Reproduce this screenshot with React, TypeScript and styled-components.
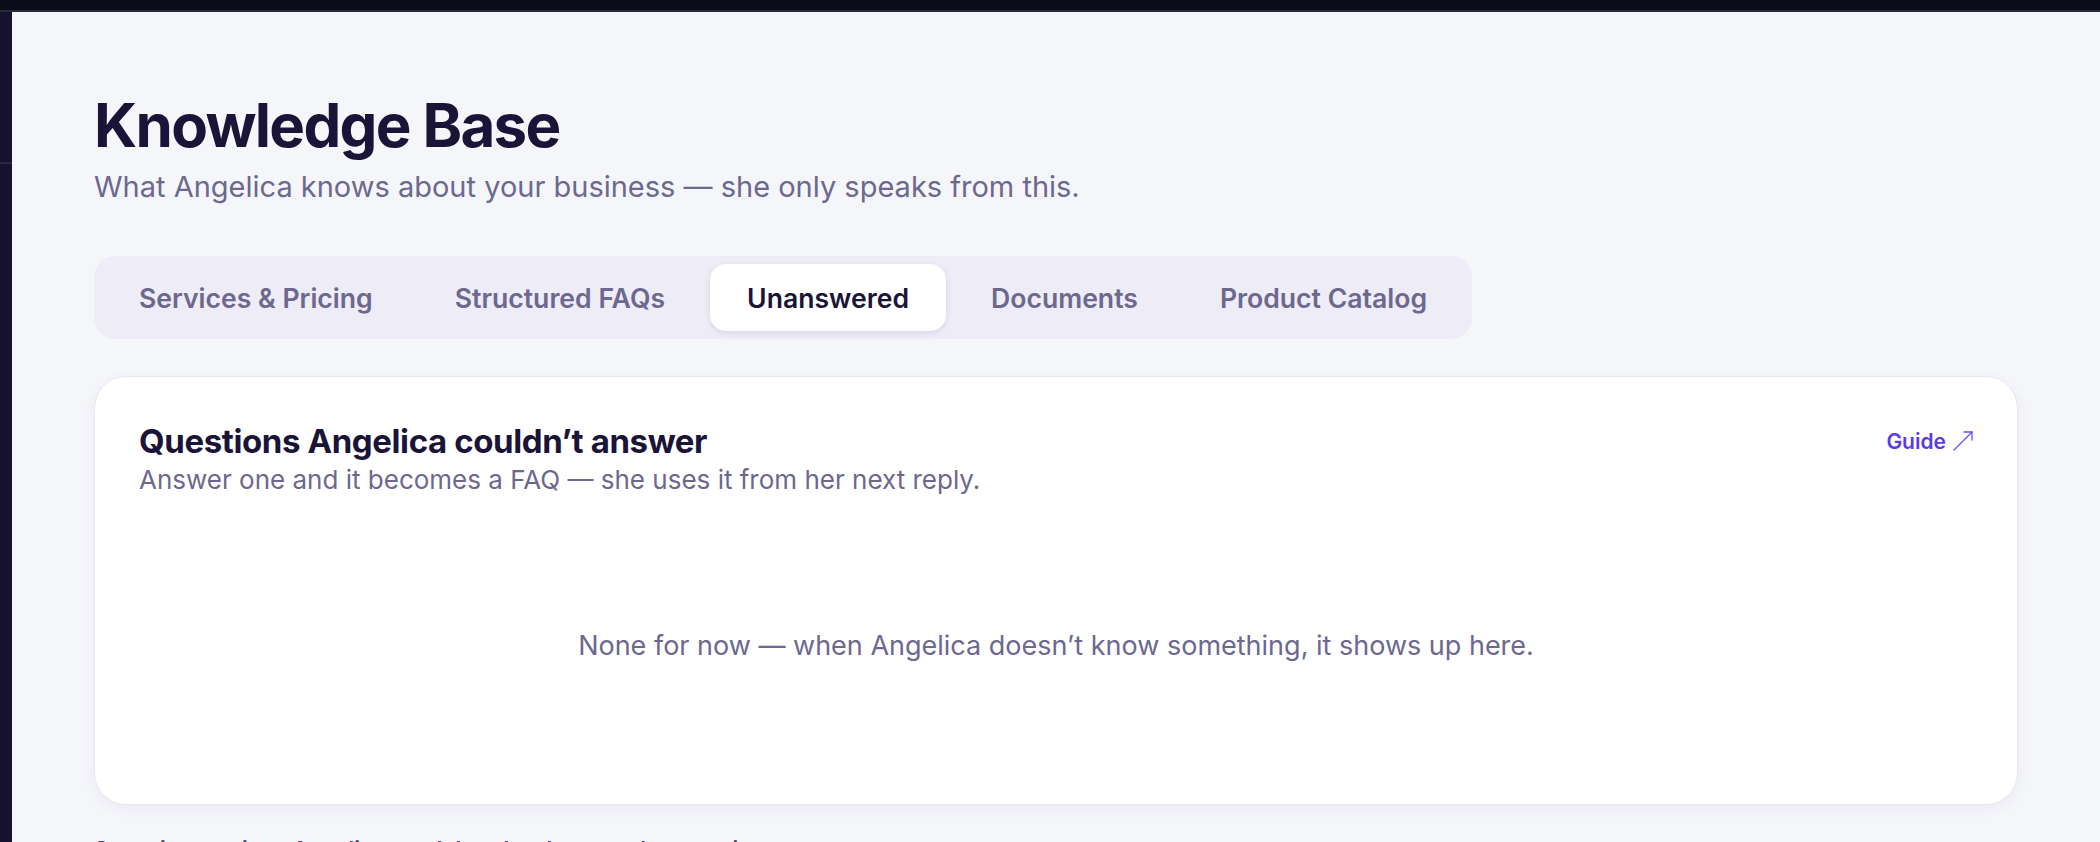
import React from 'react';
import styled, { createGlobalStyle } from 'styled-components';

const TABS = ['Services & Pricing', 'Structured FAQs', 'Unanswered', 'Documents', 'Product Catalog'];

const GlobalStyle = createGlobalStyle`
	html, body {
		margin: 0;
		padding: 0;
		height: 100%;
		overflow: hidden;
		background: #0b0c1a;
	}
	body {
		font-family: Inter, 'Noto Sans', 'Liberation Sans', sans-serif;
		-webkit-font-smoothing: antialiased;
	}
	#root {
		height: 100%;
	}
`;

const Shell = styled.div`
	display: flex;
	flex-direction: column;
	height: 842px;
	overflow: hidden;
`;

const TopBar = styled.div`
	height: 10px;
	flex-shrink: 0;
	background: #0b0c1a;
	border-bottom: 2px solid #2a2a3c;
`;

const Body = styled.div`
	flex: 1;
	display: flex;
	min-height: 0;
`;

const Sidebar = styled.div`
	width: 12px;
	flex-shrink: 0;
	background: #16112e;
	padding-top: 150px;
`;

const SidebarRule = styled.div`
	height: 2px;
	background: #2c2546;
`;

const Main = styled.main`
	flex: 1;
	background: #f5f6fa;
	padding: 80px 82px 0 82px;
	overflow: hidden;
`;

const Title = styled.h1`
	margin: 0;
	font-size: 60px;
	line-height: 66px;
	font-weight: 700;
	letter-spacing: -0.028em;
	color: #1a1438;
`;

const Subtitle = styled.p`
	margin: 9px 0 0;
	font-size: 29px;
	line-height: 39px;
	color: #6c6890;
`;

const TabList = styled.div`
	display: inline-flex;
	gap: 8px;
	margin-top: 50px;
	padding: 8px;
	background: #eeecf6;
	border-radius: 21px;
`;

const Tab = styled.button<{ $active?: boolean }>`
	height: 67px;
	padding: 0 37px;
	border: none;
	border-radius: 16px;
	font-family: inherit;
	font-size: 26.6px;
	font-weight: 600;
	cursor: pointer;
	color: ${p => (p.$active ? '#1a1438' : '#6c6890')};
	background: ${p => (p.$active ? '#ffffff' : 'transparent')};
	box-shadow: ${p => (p.$active ? '0 2px 6px rgba(60, 50, 120, 0.12)' : 'none')};
`;

const Card = styled.section`
	margin-top: 37px;
	background: #ffffff;
	border: 1px solid #e9e6f5;
	border-radius: 32px;
	padding: 44px 44px 44px;
	box-shadow: 0 4px 14px rgba(60, 50, 120, 0.06);
`;

const CardHeader = styled.div`
	display: flex;
	justify-content: space-between;
	align-items: flex-start;
`;

const CardTitle = styled.h2`
	margin: 0;
	font-size: 33px;
	line-height: 40px;
	font-weight: 700;
	letter-spacing: -0.012em;
	color: #1a1438;
`;

const CardSubtitle = styled.p`
	margin: 0;
	font-size: 26px;
	line-height: 37px;
	color: #6c6890;
`;

const GuideLink = styled.a`
	display: flex;
	align-items: center;
	gap: 7px;
	height: 40px;
	font-size: 21px;
	font-weight: 600;
	color: #5b3be6;
	text-decoration: none;
	cursor: pointer;
`;

const EmptyState = styled.p`
	margin: 0;
	padding: 128px 0 94px;
	text-align: center;
	font-size: 27px;
	line-height: 40px;
	color: #6c6890;
`;

const FootNote = styled.p`
	margin: 29px 0 0;
	font-size: 22px;
	line-height: 30px;
	font-weight: 600;
	color: #4a4566;
`;

const ArrowIcon = () => (
	<svg width="20" height="20" viewBox="0 0 20 20" fill="none" stroke="#6a4cf0" strokeWidth="1.3" strokeLinecap="round">
		<path d="M1 19 L19 1" />
		<path d="M11 1 H19 V9" />
	</svg>
);

const App = () => (
	<>
		<GlobalStyle />
		<Shell>
			<TopBar />
			<Body>
				<Sidebar>
					<SidebarRule />
				</Sidebar>
				<Main>
					<Title>Knowledge Base</Title>
					<Subtitle>What Angelica knows about your business — she only speaks from this.</Subtitle>
					<TabList>
						{TABS.map(tab => (
							<Tab key={tab} $active={tab === 'Unanswered'}>
								{tab}
							</Tab>
						))}
					</TabList>
					<Card>
						<CardHeader>
							<div>
								<CardTitle>Questions Angelica couldn’t answer</CardTitle>
								<CardSubtitle>Answer one and it becomes a FAQ — she uses it from her next reply.</CardSubtitle>
							</div>
							<GuideLink>
								Guide
								<ArrowIcon />
							</GuideLink>
						</CardHeader>
						<EmptyState>None for now — when Angelica doesn’t know something, it shows up here.</EmptyState>
					</Card>
					<FootNote>Some instructions Angelica won’t break, whatever the question.</FootNote>
				</Main>
			</Body>
		</Shell>
	</>
);

export default App;
